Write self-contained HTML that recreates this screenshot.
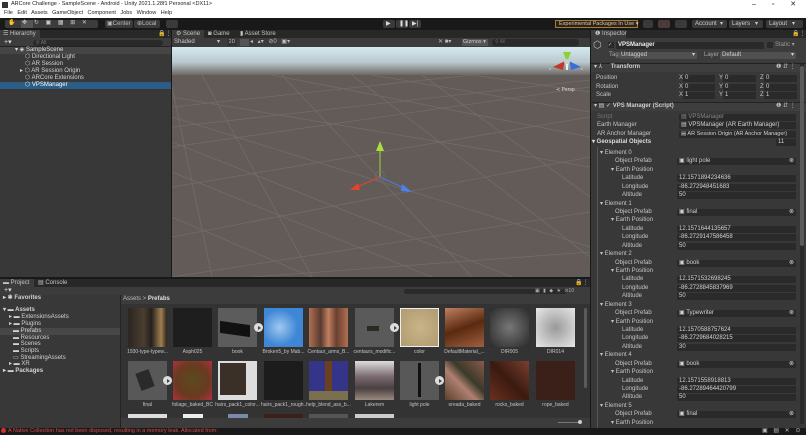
<!DOCTYPE html>
<html><head><meta charset="utf-8"><style>
*{margin:0;padding:0;box-sizing:border-box}
body{width:806px;height:435px;overflow:hidden;background:#383838;font-family:"Liberation Sans",sans-serif;font-size:6px;color:#d2d2d2;position:relative}
.a{position:absolute;white-space:nowrap}
.fld{position:absolute;background:#2a2a2a;height:7px;border-radius:1px;padding-left:2px;line-height:7px;color:#d2d2d2;white-space:nowrap}
.lbl{position:absolute;line-height:8px;color:#c4c4c4;white-space:nowrap}
.th{position:absolute;width:39px;height:39px}
.tl{position:absolute;width:45px;text-align:center;font-size:5px;color:#c4c4c4;white-space:nowrap;overflow:hidden}
.tab{position:absolute;line-height:8px;color:#c4c4c4;white-space:nowrap}
.btn{position:absolute;background:#3a3a3a;border-radius:2px}
.play{position:absolute;width:9px;height:9px;border-radius:50%;background:#ddd}
.play:after{content:"";position:absolute;left:3.5px;top:2.5px;border-left:3px solid #444;border-top:2px solid transparent;border-bottom:2px solid transparent}
</style></head><body>
<div class="a" style="left:0;top:0;width:806px;height:18px;background:#fff"></div>
<div class="a" style="left:2px;top:2px;width:6px;height:6px;background:#333"></div>
<div class="a" style="left:11px;top:1px;color:#222;font-size:5.5px;line-height:7px">ARCore Challenge - SampleScene - Android - Unity 2021.1.28f1 Personal &lt;DX11&gt;</div>
<div class="a" style="left:4px;top:10px;color:#222;font-size:5.5px;line-height:7px;word-spacing:3px">File Edit Assets GameObject Component Jobs Window Help</div>
<div class="a" style="left:752px;top:0;color:#222;font-size:7px;line-height:9px;word-spacing:14px">– ▫ ✕</div>
<div class="a" style="left:0;top:18px;width:806px;height:12px;background:#191919"></div>
<div class="btn" style="left:5px;top:20px;width:93px;height:8px;background:#3c3c3c"></div>
<div class="a" style="left:21px;top:20px;width:12px;height:8px;background:#555"></div>
<div class="a" style="left:8px;top:19px;color:#ccc;font-size:6px;word-spacing:5px">✋ ✥ ↻ ▣ ▦ ⊞ ✕</div>
<div class="btn" style="left:105px;top:20px;width:28px;height:8px"></div><div class="a" style="left:107px;top:20px;color:#bbb;line-height:8px">▣Center</div>
<div class="btn" style="left:134px;top:20px;width:26px;height:8px"></div><div class="a" style="left:137px;top:20px;color:#bbb;line-height:8px">⊕Local</div>
<div class="btn" style="left:166px;top:20px;width:12px;height:8px"></div>
<div class="btn" style="left:383px;top:20px;width:12px;height:8px"></div><div class="a" style="left:386px;top:20px;color:#ddd;line-height:8px">▶</div>
<div class="btn" style="left:396px;top:20px;width:12px;height:8px"></div><div class="a" style="left:399px;top:20px;color:#ddd;line-height:8px">❚❚</div>
<div class="btn" style="left:409px;top:20px;width:12px;height:8px"></div><div class="a" style="left:412px;top:20px;color:#ddd;line-height:8px">▶|</div>
<div class="a" style="left:555px;top:20px;width:83px;height:8px;border:1px solid #b07a2a;background:#252525;color:#e8c890;line-height:6px;padding-left:3px;font-size:5.5px">Experimental Packages In Use ▾</div>
<div class="btn" style="left:643px;top:20px;width:10px;height:8px"></div>
<div class="btn" style="left:658px;top:20px;width:12px;height:8px;background:#4a3a3a"></div>
<div class="btn" style="left:675px;top:20px;width:12px;height:8px"></div>
<div class="btn" style="left:692px;top:20px;width:35px;height:8px"></div><div class="a" style="left:695px;top:20px;line-height:8px;color:#ccc">Account &nbsp;▾</div>
<div class="btn" style="left:729px;top:20px;width:34px;height:8px"></div><div class="a" style="left:732px;top:20px;line-height:8px;color:#ccc">Layers &nbsp;&nbsp;▾</div>
<div class="btn" style="left:766px;top:20px;width:37px;height:8px"></div><div class="a" style="left:769px;top:20px;line-height:8px;color:#ccc">Layout &nbsp;&nbsp;▾</div>

<div class="a" style="left:0;top:30px;width:171px;height:247px;background:#383838"></div>
<div class="a" style="left:0;top:30px;width:171px;height:8px;background:#282828"></div>
<div class="a" style="left:0;top:30px;width:40px;height:8px;background:#3c3c3c"></div>
<div class="tab" style="left:3px;top:30px">☰ Hierarchy</div>
<div class="a" style="left:158px;top:30px;line-height:8px;color:#aaa">🔒⋮</div>
<div class="a" style="left:0;top:38px;width:171px;height:9px;background:#3c3c3c;border-bottom:1px solid #232323"></div>
<div class="a" style="left:4px;top:38px;line-height:9px;color:#ddd;font-size:7px">+▾</div>
<div class="a" style="left:33px;top:40px;width:130px;height:6px;background:#2a2a2a;border-radius:3px;color:#777;font-size:5px;line-height:6px;padding-left:3px">⚲ All</div>
<div class="a" style="left:0;top:47px;width:171px;height:7px;background:#454545"></div>
<div class="a" style="left:15px;top:47px;line-height:7px;color:#ddd">▾ ◈ SampleScene</div>
<div class="a" style="left:25px;top:54px;line-height:7px">⬡ Directional Light</div>
<div class="a" style="left:25px;top:61px;line-height:7px">⬡ AR Session</div>
<div class="a" style="left:20px;top:68px;line-height:7px">▸ ⬡ AR Session Origin</div>
<div class="a" style="left:25px;top:75px;line-height:7px">⬡ ARCore Extensions</div>
<div class="a" style="left:0;top:82px;width:171px;height:7px;background:#2c5d87"></div>
<div class="a" style="left:25px;top:82px;line-height:7px;color:#fff">⬡ VPSManager</div>
<div class="a" style="left:171px;top:30px;width:1px;height:247px;background:#191919"></div>

<div class="a" style="left:172px;top:30px;width:418px;height:8px;background:#282828"></div>
<div class="a" style="left:172px;top:30px;width:32px;height:8px;background:#3c3c3c"></div>
<div class="tab" style="left:176px;top:30px">⚙ Scene</div>
<div class="tab" style="left:208px;top:30px">◙ Game</div>
<div class="tab" style="left:240px;top:30px">▮ Asset Store</div>
<div class="a" style="left:172px;top:38px;width:418px;height:9px;background:#3c3c3c"></div>
<div class="a" style="left:174px;top:38px;line-height:9px;color:#ccc">Shaded</div>
<div class="a" style="left:217px;top:38px;line-height:9px;color:#ccc">▾</div>
<div class="a" style="left:227px;top:39px;width:10px;height:7px;background:#333;color:#bbb;font-size:5px;line-height:7px;text-align:center">2D</div>
<div class="a" style="left:240px;top:39px;width:9px;height:7px;background:#555"></div>
<div class="a" style="left:250px;top:38px;line-height:9px;color:#bbb;word-spacing:3px">◂ ▴▾ ⊘0 ▣▾</div>
<div class="a" style="left:438px;top:38px;line-height:9px;color:#bbb">✕ ■▾</div>
<div class="a" style="left:462px;top:39px;width:26px;height:7px;background:#555;color:#ccc;font-size:5.5px;line-height:7px;padding-left:1px">Gizmos ▾</div>
<div class="a" style="left:492px;top:39px;width:87px;height:7px;background:#2a2a2a;border-radius:3px;color:#666;font-size:5px;line-height:7px;padding-left:3px">⚲ All</div>
<svg class="a" style="left:172px;top:47px" width="418" height="230" viewBox="0 0 418 230">
<defs><linearGradient id="sk" x1="0" y1="0" x2="0" y2="1"><stop offset="0" stop-color="#d5eaf0"/><stop offset=".55" stop-color="#b8c8cc"/><stop offset="1" stop-color="#6d6864"/></linearGradient></defs>
<rect width="418" height="230" fill="#625b57"/>
<rect width="418" height="28" fill="url(#sk)"/>
<g stroke="#736c67" stroke-width="0.8" fill="none">
<path d="M0 100L418 40M0 140L418 70M0 190L418 110M0 230L418 165M80 230L418 205M0 60L300 28M0 80L418 33"/>
<path d="M0 70L418 200M0 50L418 120M100 28L418 90M0 95L340 230M0 125L260 230M0 170L140 230M200 28L418 65M300 28L418 45"/>
<path d="M30 28L140 230M110 28L300 230M180 28L418 210M250 28L418 150M0 40L40 230"/>
</g>
<line x1="208" y1="130" x2="208" y2="98" stroke="#9fd33a" stroke-width="1"/><path d="M204 104L208 94L212 104Z" fill="#a8e03a"/>
<line x1="208" y1="130" x2="185" y2="140" stroke="#d84a2e"/><path d="M178 143L186 136L188 143Z" fill="#e0452a"/>
<line x1="208" y1="130" x2="232" y2="141" stroke="#4a7cd8"/><path d="M240 145L230 137L229 144Z" fill="#4a80ef"/>
<rect x="204" y="125" width="8" height="8" fill="none" stroke="#7a6e8a" stroke-width=".6"/>
<g transform="translate(395,15)"><path d="M-4 -10L0 0L4 -10Z" fill="#8dd12e"/><path d="M-14 5L-2 -1L-4 8Z" fill="#c0392b"/><path d="M14 5L2 -1L4 8Z" fill="#3b6fd8"/><circle r="3" fill="#ccc"/><rect x="-1" y="2" width="2" height="6" fill="#eee"/><text x="-18" y="8" font-size="4" fill="#ddd">x</text><text x="14" y="8" font-size="4" fill="#ddd">z</text></g>
<text x="384" y="44" font-size="5" fill="#ddd" font-family="Liberation Sans">≺ Persp</text>
</svg>
<div class="a" style="left:590px;top:30px;width:1px;height:398px;background:#191919"></div>

<div class="a" style="left:591px;top:30px;width:215px;height:8px;background:#282828"></div>
<div class="a" style="left:591px;top:30px;width:35px;height:8px;background:#3c3c3c"></div>
<div class="tab" style="left:595px;top:30px">❶ Inspector</div>
<div class="a" style="left:792px;top:30px;line-height:8px;color:#aaa">🔒⋮</div>
<div class="a" style="left:591px;top:38px;width:215px;height:24px;background:#3c3c3c"></div>
<div class="a" style="left:593px;top:40px;font-size:10px;color:#bbb">⬡</div>
<div class="a" style="left:608px;top:42px;width:6px;height:6px;background:#2a2a2a;color:#ddd;font-size:5px;line-height:6px">✓</div>
<div class="fld" style="left:616px;top:42px;width:148px;height:7px;color:#eee;font-weight:bold">VPSManager</div>
<div class="a" style="left:767px;top:42px;width:6px;height:6px;background:#2a2a2a"></div>
<div class="a" style="left:775px;top:42px;line-height:7px;color:#999">Static ▾</div>
<div class="a" style="left:609px;top:52px;line-height:7px;color:#aaa">Tag</div>
<div class="fld" style="left:619px;top:52px;width:78px;background:#505050">Untagged<span style="float:right;padding-right:2px">▾</span></div>
<div class="a" style="left:704px;top:52px;line-height:7px;color:#aaa">Layer</div>
<div class="fld" style="left:720px;top:52px;width:76px;background:#505050">Default<span style="float:right;padding-right:2px">▾</span></div>
<div class="a" style="left:591px;top:63px;width:215px;height:9px;background:#3e3e3e;border-top:1px solid #232323"></div>
<div class="a" style="left:594px;top:63px;line-height:9px;color:#ccc">▾ ⅄ &nbsp;&nbsp;&nbsp;&nbsp;<b>Transform</b></div>
<div class="a" style="left:776px;top:63px;line-height:9px;color:#bbb">❶ ⇵ ⋮</div>
<div class="lbl" style="left:596px;top:74px">Position</div><div class="lbl" style="left:596px;top:83px">Rotation</div><div class="lbl" style="left:596px;top:91px">Scale</div>
<div class="lbl" style="left:679px;top:74px">X</div><div class="fld" style="left:683px;top:75px;width:32px">0</div>
<div class="lbl" style="left:719px;top:74px">Y</div><div class="fld" style="left:723px;top:75px;width:33px">0</div>
<div class="lbl" style="left:760px;top:74px">Z</div><div class="fld" style="left:764px;top:75px;width:33px">0</div>
<div class="lbl" style="left:679px;top:83px">X</div><div class="fld" style="left:683px;top:84px;width:32px">0</div>
<div class="lbl" style="left:719px;top:83px">Y</div><div class="fld" style="left:723px;top:84px;width:33px">0</div>
<div class="lbl" style="left:760px;top:83px">Z</div><div class="fld" style="left:764px;top:84px;width:33px">0</div>
<div class="lbl" style="left:679px;top:91px">X</div><div class="fld" style="left:683px;top:92px;width:32px">1</div>
<div class="lbl" style="left:719px;top:91px">Y</div><div class="fld" style="left:723px;top:92px;width:33px">1</div>
<div class="lbl" style="left:760px;top:91px">Z</div><div class="fld" style="left:764px;top:92px;width:33px">1</div>
<div class="a" style="left:591px;top:102px;width:215px;height:9px;background:#3e3e3e;border-top:1px solid #232323"></div>
<div class="a" style="left:594px;top:102px;line-height:9px;color:#ccc">▾ ▤ ✓ <b>VPS Manager (Script)</b></div>
<div class="a" style="left:776px;top:102px;line-height:9px;color:#bbb">❶ ⇵ ⋮</div>
<div class="lbl" style="left:597px;top:113px;color:#777">Script</div><div class="fld" style="left:679px;top:114px;width:117px;color:#888">▤ VPSManager</div>
<div class="lbl" style="left:597px;top:121px">Earth Manager</div><div class="fld" style="left:679px;top:122px;width:117px">▤ VPSManager (AR Earth Manager)</div>
<div class="lbl" style="left:597px;top:130px">AR Anchor Manager</div><div class="fld" style="left:679px;top:131px;width:117px;font-size:5.5px">▤ AR Session Origin (AR Anchor Manager)</div>
<div class="lbl" style="left:592px;top:138px;font-weight:bold;color:#ddd">▾ Geospatial Objects</div><div class="fld" style="left:776px;top:139px;width:20px">11</div>
<div class="a" style="left:597px;top:147px;width:1px;height:281px;background:#555"></div>

<div class="lbl" style="left:600px;top:149px">▾ Element 0</div>
<div class="lbl" style="left:615px;top:157px">Object Prefab</div><div class="fld" style="left:677px;top:158px;width:119px">▣ light pole<span style="float:right;padding-right:2px">⊗</span></div>
<div class="lbl" style="left:611px;top:166px">▾ Earth Position</div>
<div class="lbl" style="left:622px;top:174px">Latitude</div><div class="fld" style="left:677px;top:175px;width:119px">12.1571894234636</div>
<div class="lbl" style="left:622px;top:183px">Longitude</div><div class="fld" style="left:677px;top:184px;width:119px">-86.272948451683</div>
<div class="lbl" style="left:622px;top:191px">Altitude</div><div class="fld" style="left:677px;top:192px;width:119px">50</div>

<div class="lbl" style="left:600px;top:200px">▾ Element 1</div>
<div class="lbl" style="left:615px;top:208px">Object Prefab</div><div class="fld" style="left:677px;top:209px;width:119px">▣ final<span style="float:right;padding-right:2px">⊗</span></div>
<div class="lbl" style="left:611px;top:216px">▾ Earth Position</div>
<div class="lbl" style="left:622px;top:225px">Latitude</div><div class="fld" style="left:677px;top:226px;width:119px">12.1571644135657</div>
<div class="lbl" style="left:622px;top:233px">Longitude</div><div class="fld" style="left:677px;top:234px;width:119px">-86.2729147586458</div>
<div class="lbl" style="left:622px;top:242px">Altitude</div><div class="fld" style="left:677px;top:243px;width:119px">50</div>

<div class="lbl" style="left:600px;top:250px">▾ Element 2</div>
<div class="lbl" style="left:615px;top:259px">Object Prefab</div><div class="fld" style="left:677px;top:260px;width:119px">▣ book<span style="float:right;padding-right:2px">⊗</span></div>
<div class="lbl" style="left:611px;top:267px">▾ Earth Position</div>
<div class="lbl" style="left:622px;top:275px">Latitude</div><div class="fld" style="left:677px;top:276px;width:119px">12.1571532698245</div>
<div class="lbl" style="left:622px;top:284px">Longitude</div><div class="fld" style="left:677px;top:285px;width:119px">-86.2728845837969</div>
<div class="lbl" style="left:622px;top:292px">Altitude</div><div class="fld" style="left:677px;top:293px;width:119px">50</div>

<div class="lbl" style="left:600px;top:301px">▾ Element 3</div>
<div class="lbl" style="left:615px;top:309px">Object Prefab</div><div class="fld" style="left:677px;top:310px;width:119px">▣ Typewriter<span style="float:right;padding-right:2px">⊗</span></div>
<div class="lbl" style="left:611px;top:318px">▾ Earth Position</div>
<div class="lbl" style="left:622px;top:326px">Latitude</div><div class="fld" style="left:677px;top:327px;width:119px">12.1570588757624</div>
<div class="lbl" style="left:622px;top:334px">Longitude</div><div class="fld" style="left:677px;top:335px;width:119px">-86.2729684028215</div>
<div class="lbl" style="left:622px;top:343px">Altitude</div><div class="fld" style="left:677px;top:344px;width:119px">30</div>

<div class="lbl" style="left:600px;top:351px">▾ Element 4</div>
<div class="lbl" style="left:615px;top:360px">Object Prefab</div><div class="fld" style="left:677px;top:361px;width:119px">▣ book<span style="float:right;padding-right:2px">⊗</span></div>
<div class="lbl" style="left:611px;top:368px">▾ Earth Position</div>
<div class="lbl" style="left:622px;top:377px">Latitude</div><div class="fld" style="left:677px;top:378px;width:119px">12.1571558918813</div>
<div class="lbl" style="left:622px;top:385px">Longitude</div><div class="fld" style="left:677px;top:386px;width:119px">-86.27289464420799</div>
<div class="lbl" style="left:622px;top:393px">Altitude</div><div class="fld" style="left:677px;top:394px;width:119px">50</div>

<div class="lbl" style="left:600px;top:402px">▾ Element 5</div>
<div class="lbl" style="left:615px;top:410px">Object Prefab</div><div class="fld" style="left:677px;top:411px;width:119px">▣ final<span style="float:right;padding-right:2px">⊗</span></div>
<div class="lbl" style="left:611px;top:419px">▾ Earth Position</div>
<div class="a" style="left:800px;top:64px;width:4px;height:360px;background:#2a2a2a"></div>
<div class="a" style="left:800px;top:66px;width:4px;height:180px;background:#5a5a5a;border-radius:2px"></div>

<div class="a" style="left:0;top:277px;width:590px;height:2px;background:#191919"></div>
<div class="a" style="left:0;top:279px;width:590px;height:8px;background:#282828"></div>
<div class="a" style="left:0;top:279px;width:34px;height:8px;background:#3c3c3c"></div>
<div class="tab" style="left:3px;top:279px">▬ Project</div>
<div class="tab" style="left:38px;top:279px">▤ Console</div>
<div class="a" style="left:575px;top:279px;line-height:8px;color:#aaa">🔒⋮</div>
<div class="a" style="left:0;top:287px;width:590px;height:8px;background:#3c3c3c"></div>
<div class="a" style="left:4px;top:286px;line-height:9px;color:#ddd;font-size:7px">+▾</div>
<div class="a" style="left:404px;top:289px;width:163px;height:5px;background:#2a2a2a;border-radius:3px"></div>
<div class="a" style="left:535px;top:287px;line-height:8px;color:#aaa;font-size:5px;word-spacing:2px">▣ ▮ ◆ ★ ⊘10</div>
<div class="a" style="left:0;top:295px;width:120px;height:133px;background:#383838"></div>
<div class="a" style="left:3px;top:295px;line-height:7px;font-weight:bold">▸ ✱ Favorites</div>
<div class="a" style="left:3px;top:307px;line-height:7px;font-weight:bold">▾ ▬ Assets</div>
<div class="a" style="left:9px;top:314px;line-height:7px">▸ ▬ ExtensionsAssets</div>
<div class="a" style="left:9px;top:321px;line-height:7px">▸ ▬ Plugins</div>
<div class="a" style="left:0;top:328px;width:120px;height:7px;background:#474747"></div>
<div class="a" style="left:13px;top:328px;line-height:7px">▬ Prefabs</div>
<div class="a" style="left:13px;top:335px;line-height:7px">▬ Resources</div>
<div class="a" style="left:13px;top:341px;line-height:7px">▬ Scenes</div>
<div class="a" style="left:13px;top:348px;line-height:7px">▬ Scripts</div>
<div class="a" style="left:13px;top:355px;line-height:7px">▭ StreamingAssets</div>
<div class="a" style="left:9px;top:361px;line-height:7px">▸ ▬ XR</div>
<div class="a" style="left:3px;top:368px;line-height:7px;font-weight:bold">▸ ▬ Packages</div>
<div class="a" style="left:120px;top:295px;width:1px;height:133px;background:#232323"></div>
<div class="a" style="left:121px;top:295px;width:469px;height:133px;background:#333"></div>
<div class="a" style="left:121px;top:295px;width:469px;height:9px;background:#3c3c3c"></div>
<div class="a" style="left:123px;top:295px;line-height:9px;color:#bbb">Assets &gt; <b style="color:#ddd">Prefabs</b></div>
<div class="th" style="left:128px;top:308px;background:linear-gradient(90deg,#2a2520,#4a3e30 40%,#25201c 60%,#a08050 85%,#2a241e)"></div>
<div class="th" style="left:173px;top:308px;background:#1e1e1e"></div>
<div class="th" style="left:218px;top:308px;background:#5c5c5c"><div style="position:absolute;left:2px;top:15px;width:30px;height:12px;background:#111;transform:skewY(8deg)"></div></div>
<div class="th" style="left:264px;top:308px;background:radial-gradient(circle at 40% 50%,#9fc8f0,#3e86d6 60%)"></div>
<div class="th" style="left:309px;top:308px;background:linear-gradient(90deg,#b07050,#5a3a30 30%,#c08060 50%,#6a4030 70%,#b07050)"></div>
<div class="th" style="left:355px;top:308px;background:#5a5a5a"><div style="position:absolute;left:12px;top:18px;width:12px;height:5px;background:#2a2a22"></div></div>
<div class="th" style="left:400px;top:308px;background:radial-gradient(#c9b48a,#b09a70);border:1px solid #eee"></div>
<div class="th" style="left:445px;top:308px;background:linear-gradient(160deg,#c08060,#5a2a10 50%,#a06040)"></div>
<div class="th" style="left:490px;top:308px;background:radial-gradient(#777,#2a2a2a)"></div>
<div class="th" style="left:536px;top:308px;background:radial-gradient(#999,#e8e8e8)"></div>
<div class="play" style="left:254px;top:323px"></div><div class="play" style="left:390px;top:323px"></div>
<div class="tl" style="left:125px;top:349px">1930-type-typew...</div>
<div class="tl" style="left:170px;top:349px">Asph025</div>
<div class="tl" style="left:215px;top:349px">book</div>
<div class="tl" style="left:261px;top:349px">Broken5_by Mab...</div>
<div class="tl" style="left:306px;top:349px">Centaur_arms_B...</div>
<div class="tl" style="left:352px;top:349px">centaurs_modific...</div>
<div class="tl" style="left:397px;top:349px">color</div>
<div class="tl" style="left:442px;top:349px">DefaultMaterial_...</div>
<div class="tl" style="left:487px;top:349px">DIR005</div>
<div class="tl" style="left:533px;top:349px">DIR014</div>
<div class="th" style="left:128px;top:361px;background:#585858"><div style="position:absolute;left:10px;top:10px;width:14px;height:18px;background:#2a2a2a;transform:rotate(-20deg)"></div></div>
<div class="th" style="left:173px;top:361px;background:radial-gradient(#5a4a20,#6a3a20 60%,#b03040)"></div>
<div class="th" style="left:218px;top:361px;background:#ddd"><div style="position:absolute;left:2px;top:2px;width:26px;height:32px;background:#3a3028"></div></div>
<div class="th" style="left:264px;top:361px;background:#1c1c1c"></div>
<div class="th" style="left:309px;top:361px;background:#343488"><div style="position:absolute;left:16px;top:0;width:7px;height:30px;background:#6a4020"></div><div style="position:absolute;left:0;top:30px;width:39px;height:9px;background:#7a7050"></div></div>
<div class="th" style="left:355px;top:361px;background:linear-gradient(#ddd,#7a6a70 40%,#4a4040 70%,#9a8a80)"></div>
<div class="th" style="left:400px;top:361px;background:#585858"><div style="position:absolute;left:18px;top:2px;width:3px;height:34px;background:#111"></div></div>
<div class="th" style="left:445px;top:361px;background:linear-gradient(45deg,#5a4030,#b08070 40%,#3a3a2a 60%,#8a5a4a)"></div>
<div class="th" style="left:490px;top:361px;background:linear-gradient(45deg,#6a3020,#3a1a10 50%,#7a4030)"></div>
<div class="th" style="left:536px;top:361px;background:#3a2018"></div>
<div class="play" style="left:163px;top:376px"></div><div class="play" style="left:435px;top:376px"></div>
<div class="tl" style="left:125px;top:402px">final</div>
<div class="tl" style="left:170px;top:402px">foliage_baked_BC</div>
<div class="tl" style="left:215px;top:402px">hairs_pack1_color...</div>
<div class="tl" style="left:261px;top:402px">hairs_pack1_rough...</div>
<div class="tl" style="left:306px;top:402px">help_blend_ass_b...</div>
<div class="tl" style="left:352px;top:402px">Lakerem</div>
<div class="tl" style="left:397px;top:402px">light pole</div>
<div class="tl" style="left:442px;top:402px">oreada_baked</div>
<div class="tl" style="left:487px;top:402px">rocks_baked</div>
<div class="tl" style="left:533px;top:402px">rope_baked</div>
<div class="a" style="left:128px;top:414px;width:39px;height:4px;background:#ddd"></div>
<div class="a" style="left:183px;top:414px;width:20px;height:4px;background:#eee"></div>
<div class="a" style="left:228px;top:414px;width:20px;height:4px;background:#7a8aaa"></div>
<div class="a" style="left:264px;top:414px;width:39px;height:4px;background:#3a2018"></div>
<div class="a" style="left:309px;top:414px;width:39px;height:4px;background:#555"></div>
<div class="a" style="left:355px;top:414px;width:39px;height:4px;background:#ccc"></div>
<div class="a" style="left:121px;top:418px;width:469px;height:10px;background:#3c3c3c"></div>
<div class="a" style="left:558px;top:422px;width:22px;height:1px;background:#777"></div>
<div class="a" style="left:578px;top:420px;width:4px;height:4px;border-radius:50%;background:#ccc"></div>
<div class="a" style="left:584px;top:308px;width:3px;height:80px;background:#5a5a5a;border-radius:2px"></div>
<div class="a" style="left:0;top:428px;width:806px;height:7px;background:#191919"></div>
<div class="a" style="left:1px;top:428px;width:5px;height:5px;border-radius:50%;background:#d03030"></div>
<div class="a" style="left:8px;top:427px;line-height:8px;color:#d84848;font-size:5.5px">A Native Collection has not been disposed, resulting in a memory leak. Allocated from:</div>
<div class="a" style="left:762px;top:427px;line-height:8px;color:#bbb;word-spacing:4px">▣ ▤ ✕ ⊙</div>
</body></html>
